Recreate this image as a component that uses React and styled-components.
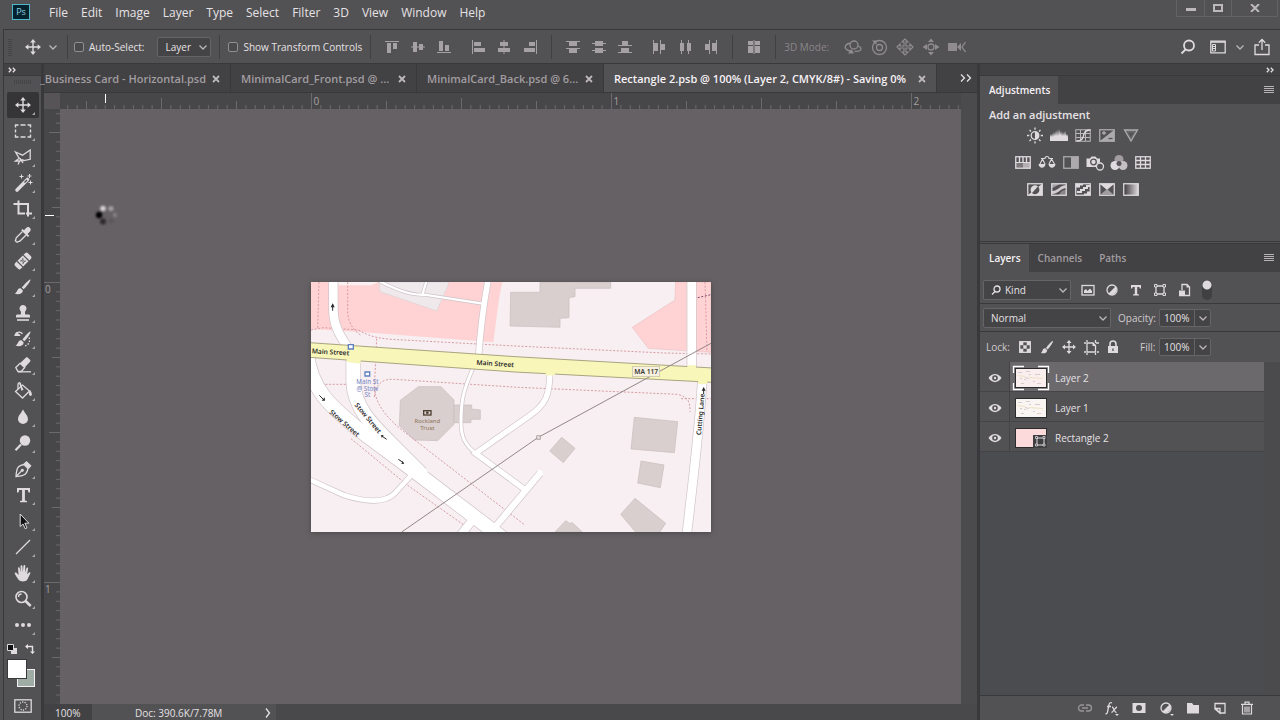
import styled, { createGlobalStyle, css } from "styled-components";

const color = {
  bar: "#525153",
  dark: "#424143",
  ruler: "#474648",
  canvas: "#656164",
  line: "#39383a",
  field: "#444345",
  fieldBorder: "#666467",
  text: "#e6e2e6",
  dim: "#a19da1",
  icon: "#dedade",
};

const GlobalStyle = createGlobalStyle`
  * {
    box-sizing: border-box;
  }
  body {
    margin: 0;
    background: ${color.bar};
    color: ${color.text};
    font-family: "Open Sans", "Noto Sans", sans-serif;
    font-size: 10px;
    line-height: 16px;
  }
  button, input, select {
    margin: 0;
    padding: 0;
    border: 0;
    background: none;
    color: inherit;
    font: inherit;
  }
  svg {
    display: block;
    flex: none;
  }
`;

/* ---------- icons ---------- */

const Icon = ({ w = 20, h = 20, children, ...rest }) => (
  <svg
    width={w}
    height={h}
    viewBox={`0 0 ${w} ${h}`}
    fill="none"
    stroke="currentColor"
    strokeWidth="1.3"
    aria-hidden="true"
    {...rest}
  >
    {children}
  </svg>
);

const Chevron = () => (
  <Icon w={10} h={10}>
    <path d="M1.5 3.5 5 7l3.5-3.5" stroke="#bab6ba" />
  </Icon>
);

const DoubleChevron = ({ big }) =>
  big ? (
    <Icon w={12} h={10}>
      <path d="M1 1.5 4.5 5 1 8.5M7 1.5 10.5 5 7 8.5" />
    </Icon>
  ) : (
    <Icon w={8} h={6}>
      <path d="M.8.8 3 3 .8 5.2M4.8.8 7 3 4.8 5.2" />
    </Icon>
  );

const MenuLines = () => (
  <Icon w={10} h={8} strokeWidth="1" stroke="#b6b2b6">
    <path d="M0 .5h10M0 2.5h10M0 4.5h10M0 6.5h10" />
  </Icon>
);

const CloseX = () => (
  <Icon w={8} h={8} strokeWidth="1.8">
    <path d="m1 1 6 6M7 1 1 7" />
  </Icon>
);

const solid = { fill: "currentColor", stroke: "none" };

const toolIcons = {
  Move: (
    <>
      <path d="M10 4v12M4 10h12" strokeWidth="1.4" />
      <path
        d="m10 2 2.8 3.4H7.2zM10 18l2.8-3.4H7.2zM2 10l3.4-2.8v5.6zM18 10l-3.4-2.8v5.6z"
        {...solid}
      />
    </>
  ),
  Marquee: (
    <path
      d="M2.5 6.5V4h3M7.5 4h5M14.5 4h3v2.5M17.5 8.5v3M17.5 13.5V16h-3M12.5 16h-5M5.5 16h-3v-2.5M2.5 11.5v-3"
      strokeWidth="1.4"
    />
  ),
  Lasso: (
    <>
      <path d="m2.5 5 7 3.2L17.2 3v9.3l-7.7 1.5L6 11z" />
      <path d="M6 11.5 2.5 14h4.3L5 17.5M6.5 11l3.5 5M7 14l3.5-1.5" />
    </>
  ),
  Wand: (
    <>
      <path d="M4 17 14.5 6.5" strokeWidth="3.6" strokeLinecap="round" />
      <path d="m11.5 9.5 2.5-2.5" stroke="#525153" strokeWidth="1.4" />
      <path d="M8.5 1.5v4M6.5 3.5h4M16.5 1v4M14.5 3h4M17.5 7.5v4M15.5 9.5h4" strokeWidth="1" />
    </>
  ),
  Crop: (
    <>
      <path d="M.5 5H15v9M5.500 1.500V14.5H12" strokeWidth="2" />
      <path d="M15 13v4.5M13 14.5h6" strokeWidth="2" />
    </>
  ),
  Eyedropper: (
    <>
      <path d="M9.5 6.5 3.5 12.5c-.8.8-.3 2-1.2 3.2.7 1 1.2 1.3 2 1.5 1.2-.9 2.2-.7 3-1.5l6-6" />
      <path
        d="M8.2 5.2 15 12l1.3-1.3-1.8-1.8L17 6.500c2.300-2.400-1.300-6.200-3.700-3.700L11 5.200 9.500 3.900z"
        {...solid}
      />
    </>
  ),
  Healing: (
    <g transform="rotate(-45 10 10)">
      <rect x="1" y="6" width="18" height="8" rx="2" {...solid} />
      <path d="M5.700 6v8M14.300 6v8" stroke="#525153" strokeWidth="1.2" />
      <path
        d="M8 8.500h1.500M10.500 8.500H12M8 11.500h1.500M10.500 11.500H12M9.200 10h1.600"
        stroke="#525153"
        strokeWidth="1.3"
      />
    </g>
  ),
  Brush: (
    <>
      <path d="M17.5 2.5c-1-.8-7 5.700-8.700 8l1.800 1.800c2.400-2 7.600-9 6.900-9.800z" {...solid} />
      <path d="M7.700 11.300c-3.500-.8-2.700 3.500-6 5.200 3 1.300 8 .8 8.200-3z" {...solid} />
    </>
  ),
  Stamp: (
    <>
      <path
        d="M10 2a3.400 3.400 0 0 0-3 5.200c1.200 1.500 1.200 2.600.7 4.300H4.500c-1 0-1.500.5-1.500 1.500v1.500h14V13c0-1-.5-1.500-1.500-1.500h-3.200c-.5-1.700-.5-2.800.7-4.300A3.400 3.400 0 0 0 10 2z"
        {...solid}
      />
      <path d="M4 17h12" strokeWidth="1.6" />
    </>
  ),
  History: (
    <>
      <path d="M17.5 2.5c-1-.8-6.500 5.700-8 8l1.800 1.800c2.400-2 6.900-9 6.200-9.800z" {...solid} />
      <path d="M8.500 11.300c-3.500-.8-2.700 3.500-6 5.200 3 1.300 8 .8 8.200-3z" {...solid} />
      <path d="M1 7h6.500c-.4-2-4-3.500-4-3.500z" {...solid} />
      <path d="M2 5.500C4 2.500 8 2.500 9.500 5" />
      <path d="M16 8.500c1.500 4-.5 7.500-4 8.500" strokeDasharray="1.5 1.5" />
    </>
  ),
  Eraser: (
    <>
      <path d="M2.8 12.500 7 8.300l4.700 4.200-3.500 4H5z" />
      <path
        d="m7 8.300 5.800-5.500c.6-.6 1.400-.6 2 0l2.200 2c.6.600.6 1.400 0 2l-5.300 5.700z"
        {...solid}
      />
      <path d="M5 16.800h13" />
    </>
  ),
  Bucket: (
    <>
      <path d="m2.5 10.500 7-6.500 7 6-7 7z" />
      <path d="M9 9.500 7.500 3c-.4-1.800-2.600-1.600-2.500.5v4.500" />
      <path d="M6.500 2.500 10 9" />
      <path d="M17 9c1.800 2.500 2.800 5 .8 6-2-.2-2.600-2.500-.8-6z" {...solid} />
    </>
  ),
  Blur: (
    <path
      d="M10 2.500c-2.500 4.300-5 6.600-5 9.500a5 5 0 0 0 10 0c0-2.900-2.500-5.200-5-9.500z"
      {...solid}
    />
  ),
  Dodge: (
    <>
      <circle cx="12" cy="7.5" r="5.2" {...solid} />
      <path d="M8 11.500 2.500 17.200" strokeWidth="2.2" />
    </>
  ),
  Pen: (
    <>
      <path d="M3 17.500c.3-4.500.7-8 2.500-9.700 1.500-1.300 3.700-2 5.500-2.300l4 4c-.4 1.900-1 4-2.300 5.300C11 16.500 7.500 17.200 3 17.500z" />
      <path d="m3.500 17 5-5" />
      <circle cx="9.300" cy="11.200" r="1.500" {...solid} />
      <path d="m10.500 4.700 3-2.700 5 4.700-2.800 3.300z" {...solid} />
    </>
  ),
  Type: (
    <path
      d="M4 3h13v4.500h-1.500L14.800 5h-2.900v10.500l2.100.5v1.300H7V16l2.100-.5V5H6.200L5.500 7.500H4z"
      {...solid}
    />
  ),
  Select: (
    <path
      d="M7.200 3v12.500l2.800-2.500 2.200 4.700 1.800-.9-2.200-4.600h4z"
      fill="#111"
      stroke="#dedade"
      strokeWidth="1"
    />
  ),
  Line: <path d="M3 17 17 3" />,
  Hand: (
    <path
      d="M5.200 16.300C4 14.500 2.200 12 1.700 10.500c-.2-1 1.200-1.500 2-.6l1.900 2L5 5.200c-.1-1.200 1.500-1.400 1.700-.2L7.700 9.500 7.500 3.200c0-1.300 1.800-1.300 1.900 0l.5 6 .5-6.200c.1-1.300 1.900-1.200 1.900.1l-.1 6.500 1.200-4.400c.4-1.200 1.900-.8 1.700.4l-1 5.600 1.600-1.500c.9-.9 2.200 0 1.500 1.100-1.200 1.900-1.600 4.200-3.400 6.500-1.500 1.600-7 1.700-8.600-1z"
      {...solid}
    />
  ),
  Zoom: (
    <>
      <circle cx="8.500" cy="8" r="5.500" strokeWidth="1.6" />
      <path d="M5.500 8a3 3 0 0 1 3-3" />
      <path d="m12.500 12 5.200 5" strokeWidth="2.6" />
    </>
  ),
  More: (
    <g {...solid}>
      <circle cx="4" cy="10" r="2" />
      <circle cx="10" cy="10" r="2" />
      <circle cx="16" cy="10" r="2" />
    </g>
  ),
};

const alignIcons = {
  "Align top": <path d="M2 3h14v1H2zM4 5h4v10H4zM10 5h4v6h-4z" />,
  "Align middle": <path d="M2 8.500h14v1H2zM4 4h4v10H4zM10 6h4v6h-4z" />,
  "Align bottom": <path d="M2 14h14v1H2zM4 3h4v10H4zM10 7h4v6h-4z" />,
  "Align left": <path d="M3 2h1v14H3zM5 4h7v4H5zM5 10h11v4H5z" />,
  "Align center": <path d="M8.500 2h1v14h-1zM5 4h8v4H5zM3 10h12v4H3z" />,
  "Align right": <path d="M15 2h1v14h-1zM8 4h6v4H8zM3 10h11v4H3z" />,
  "Distribute top": <path d="M2 3h14v1H2zM5 4h8v4H5zM2 10h14v1H2zM5 11h8v4H5z" />,
  "Distribute middle": <path d="M2 5h14v1H2zM5 3h8v5H5zM2 12h14v1H2zM5 10h8v5H5z" />,
  "Distribute bottom": <path d="M2 7h14v1H2zM6 3h6v4H6zM2 14h14v1H2zM5 10h8v4H5z" />,
  "Distribute left": <path d="M3 2h1v14H3zM4 5h4v8H4zM10 2h1v14h-1zM11 6h4v6h-4z" />,
  "Distribute center": <path d="M5 2h1v14H5zM4 5h4v8H4zM12 2h1v14h-1zM11 5h4v8h-4z" />,
  "Distribute right": <path d="M7 2h1v14H7zM3 6h4v6H3zM14 2h1v14h-1zM10 5h4v8h-4z" />,
};

const AutoAlign = (
  <path d="M8.500 2h1v14h-1zM3 3h5v4H3zM10 3h5v4h-5zM3 8h5v7H3zM10 8h5v7h-5z" />
);

const threeDIcons = {
  Orbit: (
    <>
      <circle cx="10" cy="7" r="4" />
      <path d="M6.500 5C1 6 .5 9 2 11c1.500 1.500 3 2 5 2M14 8c3 1 4 3 2 4.500-1.500 1-3.500 1-5.500.8" />
      <path d="M4 15.500h6L7.500 11z" {...solid} />
    </>
  ),
  Roll: (
    <>
      <circle cx="9.500" cy="9.500" r="7" />
      <circle cx="9.500" cy="9.500" r="3" />
      <path d="M2 2.500h4.500V7z" {...solid} />
    </>
  ),
  Pan: (
    <path
      d="M9 1 6 4h2v4H4V6L1 9l3 3v-2h4v4H6l3 3 3-3h-2v-4h4v2l3-3-3-3v2h-4V4h2z"
      strokeWidth="1.2"
    />
  ),
  Slide: (
    <>
      <circle cx="9" cy="9" r="3" />
      <path d="m6 4 3-3.500L12 4zM6 14h6l-3 3.500zM.5 9 5 6v6zM17.500 9 13 6v6z" {...solid} />
    </>
  ),
  Camera: (
    <>
      <path d="M0 5h9v8H0zM9 9l4-4v8z" {...solid} />
      <path d="M17.500 4 14 9l3.500 5" />
    </>
  ),
};

const boxed = { x: 0.75, y: 0.75, width: 14.5, height: 11.5 };

const adjustmentRows = [
  {
    Brightness: (
      <>
        <circle cx="8" cy="6.500" r="3.800" />
        <path d="M8 2.700a3.800 3.800 0 0 1 0 7.600z" {...solid} />
        <path d="M8-1.500v2.300M8 12.200v2.300M0 6.500h2.300M13.700 6.500H16M2.500 1l1.500 1.500M12 10.500l1.500 1.500M13.500 1 12 2.500M4 10.500 2.500 12" />
      </>
    ),
    Levels: (
      <path
        d="M-1 12V8l1-3 1 3V4l1 4 1-5 1 4V2l1 5L6 1l1 6 1-7 1 6 1-4 1 5 1-4 1 4 1-5 1 5 1-2 1 3v4z"
        {...solid}
      />
    ),
    Curves: (
      <>
        <g strokeWidth="1" opacity=".75">
          <rect {...boxed} />
          <path d="M5.500 1v11M10.500 1v11M1 4.500h14M1 8.500h14" />
        </g>
        <path d="M1.500 12C8 12 8 8 9 5s2.500-4 6.500-4" />
      </>
    ),
    Exposure: (
      <g opacity=".65">
        <rect {...boxed} />
        <path d="M1 12 15 1v11z" {...solid} />
        <path d="M3 4h4M5 2v4" />
        <path d="M9.500 9.500h4" stroke="#525153" />
      </g>
    ),
    Vibrance: (
      <g opacity=".65">
        <path d="M1.500 1h13L8 12z" fill="#777" />
        <path d="M5 3.500h6L8 8.500z" fill="#555" stroke="none" />
      </g>
    ),
  },
  {
    "Hue/Saturation": (
      <>
        <path d="M1 7h14v5H1z" fill="#7c787c" stroke="none" />
        <path d="M8 7h7v5H8z" fill="#b3afb3" stroke="none" />
        <rect {...boxed} />
        <path d="M1 6.500h14" strokeWidth="1" />
        <path d="M4.500 1v5M8 1v5M11.500 1v5" strokeWidth="1.4" />
      </>
    ),
    "Color Balance": (
      <>
        <path
          d="M2 2.500h4a2 2 0 0 1 4 0h4M3.500 3 1 8M3.500 3 6 8M12.500 3 10 8M12.500 3l3 5"
          strokeWidth="1.1"
        />
        <path d="M-.5 8h7c-.5 5-6.500 5-7 0zM9.500 8h7c-.5 5-6.500 5-7 0z" {...solid} />
      </>
    ),
    "Black & White": (
      <g opacity=".65">
        <rect {...boxed} />
        <path d="M8 1h7v11H8z" {...solid} />
      </g>
    ),
    "Photo Filter": (
      <>
        <path d="M-.5 2.500H3l1.500-2h4l1.500 2h3v4A4.500 4.500 0 0 0 9 11H-.5z" {...solid} />
        <circle cx="6.500" cy="6" r="2.800" stroke="#525153" />
        <circle cx="13" cy="10.500" r="3.500" fill="#525153" />
      </>
    ),
    "Channel Mixer": (
      <g stroke="none">
        <circle cx="8" cy="3.500" r="4.500" fill="#a19da1" />
        <circle cx="4" cy="9.500" r="4.500" fill="#dedade" />
        <circle cx="12" cy="9.500" r="4.500" fill="#c4c0c4" />
        <circle cx="8" cy="7.500" r="2.500" fill="#58565a" />
      </g>
    ),
    "Color Lookup": (
      <>
        <rect {...boxed} />
        <path d="M5.500 1v11M10.500 1v11M1 4.500h14M1 8.500h14" />
      </>
    ),
  },
  {
    Invert: (
      <>
        <rect {...boxed} />
        <path d="M1 12 15 1v11z" {...solid} />
        <path d="M5 10a4 4 0 0 1 6-6.500z" {...solid} />
        <path d="M5 10a4.200 4.200 0 0 0 6-6.500z" fill="#525153" stroke="none" />
      </>
    ),
    Posterize: (
      <>
        <path d="M1 5C5 4 6 2 9 1H1z" fill="#a19da1" stroke="none" />
        <path d="M1 8C7 8 8 3 15 2v3C9 6 7 11 1 11z" fill="#d0ccd0" stroke="none" />
        <path d="M8 12c2-4 4-5 7-5v5z" fill="#8a868a" stroke="none" />
        <rect {...boxed} />
      </>
    ),
    Threshold: (
      <>
        <rect {...boxed} />
        <path d="M2 10V8h3V6h3V4h3V2h4v2h-2v2h-3v2H7v2z" {...solid} />
        <path d="M1 1h7v1.500H5v2H1zM15 12H9v-1.500h3v-2h3z" {...solid} />
      </>
    ),
    "Selective Color": (
      <>
        <rect {...boxed} />
        <path d="M1 1h14L8 7z" {...solid} />
        <path d="M1 12h14L8 6z" fill="#a19da1" stroke="none" />
      </>
    ),
    "Gradient Map": (
      <>
        <defs>
          <linearGradient id="gradientMap">
            <stop offset="0" stopColor="#3a383a" />
            <stop offset="1" stopColor="#dedade" />
          </linearGradient>
        </defs>
        <rect {...boxed} fill="url(#gradientMap)" />
      </>
    ),
  },
];

const filterIcons = {
  "Pixel layers": (
    <>
      <rect x="2" y="3.500" width="12" height="9.500" />
      <path d="M4 11V8.500L6 7l1.500 2L10 6.500 12 9v2z" {...solid} />
    </>
  ),
  "Adjustment layers": (
    <>
      <circle cx="8" cy="8" r="5" />
      <path d="M11.500 4.500a5 5 0 0 1-7 7z" {...solid} />
    </>
  ),
  "Type layers": (
    <path
      d="M3 3h10v3.500h-1.200L11.300 5H9.200v7l1.800.4v1.100H5v-1.100l1.800-.4V5H4.700l-.5 1.500H3z"
      {...solid}
    />
  ),
  "Shape layers": (
    <>
      <path d="M4 4h8v8H4z" />
      <path
        d="M2.500 2.500H5V5H2.500zM11 2.500h2.500V5H11zM2.500 11H5v2.500H2.500zM11 11h2.500v2.500H11z"
        fill="#525153"
        strokeWidth="1"
      />
    </>
  ),
  "Smart objects": (
    <>
      <path d="M6 8V2.500h5L13.500 5v8.500H9" />
      <path d="M3 8.500h6v5.800H3zM10.500 2v3.500H14z" {...solid} />
    </>
  ),
};

const lockIcons = {
  "Lock transparent pixels": (
    <>
      <rect x="2.700" y="2.700" width="10.600" height="10.600" />
      <path
        d="M3 3h3.300v3.300H3zM9.700 3H13v3.300H9.700zM6.300 6.300h3.400v3.400H6.300zM3 9.700h3.300V13H3zM9.700 9.700H13V13H9.700z"
        {...solid}
      />
    </>
  ),
  "Lock image pixels": (
    <path
      d="M14 2c-1-.7-5.500 4.700-7 7l1.500 1.500C10.500 9 14.500 2.700 14 2zM6.300 9.300c-2.800-.5-2.300 3-4.300 4.700 2.500.8 6 .3 6.200-2.800z"
      {...solid}
    />
  ),
  "Lock position": (
    <>
      <path d="M8 2v12M2 8h12" />
      <path d="m8 1 2.500 3h-5zM8 15l2.500-3h-5zM1 8l3-2.500v5zM15 8l-3-2.500v5z" {...solid} />
    </>
  ),
  "Lock artboard": (
    <>
      <path d="M4 4h6l2.500 2.500V13H4z" />
      <path d="M1 4h2M1 13h2M14 13h2M4 1v2M4 14v2M12.500 1v3M12.500 14v2M13 4h3" />
      <path d="M9.500 3.500V7H13z" {...solid} />
    </>
  ),
  "Lock all": (
    <>
      <path d="M5 8V5a3 3 0 0 1 6 0v3" strokeWidth="1.6" />
      <path d="M3 7h10v7H3z" {...solid} />
      <path d="M8 9.500V12" stroke="#525153" />
    </>
  ),
};

const footerIcons = {
  "Link layers": (
    <g opacity=".5">
      <path d="M7 5H4.500a3 3 0 0 0 0 6H7M9 5h2.500a3 3 0 0 1 0 6H9M5 8h6" />
    </g>
  ),
  "Layer style": (
    <>
      <path d="M8 3c-2-1-2.800.5-3.200 2.500L3.500 12c-.3 1.700-1 2-2 1.600M3 6.500h4M8 7c2 0 2 6 4.500 5.500M13 7c-2 .5-3.500 5-5.500 5.500" />
      <path d="M11 14h4l-2 2z" {...solid} />
    </>
  ),
  "Add mask": (
    <>
      <path d="M1.500 3h13v10h-13z" {...solid} />
      <circle cx="8" cy="8" r="3" fill="#525153" stroke="none" />
    </>
  ),
  "New adjustment": (
    <>
      <circle cx="8" cy="8" r="5" />
      <path d="M11.500 4.500a5 5 0 0 1-7 7z" {...solid} />
      <path d="M12 14h4l-2 2z" {...solid} />
    </>
  ),
  "New group": <path d="M2 3h5l1.500 2H14v8.500H2z" {...solid} />,
  "New layer": (
    <>
      <path d="M3 3.500h10V13H8L3 9z" />
      <path d="M3.500 8.500H8V13z" />
    </>
  ),
  Delete: (
    <path
      d="M3.500 5v9h9V5M2 4.300h12M6 4V2.200h4V4M6 6.500v6M8 6.500v6M10 6.500v6"
      strokeWidth="1.2"
    />
  ),
};

/* ---------- menu bar ---------- */

const Page = styled.div`
  display: flex;
  flex-direction: column;
  height: 100vh;
  min-height: 720px;
  overflow: hidden;
  background: ${color.bar};
`;

const MenuBar = styled.header`
  display: flex;
  height: 29px;
  padding-left: 12px;
`;

const PsLogo = styled.div`
  width: 18px;
  height: 16px;
  margin: 4px 12px 0 0;
  border: 1px solid #4fb8c9;
  background: #06222f;
  color: #8fd4e4;
  font-size: 9px;
  line-height: 14px;
  text-align: center;
`;

const Menus = styled.nav`
  display: flex;
  flex: 1;
`;

const MenuItem = styled.button`
  height: 26px;
  padding: 0 6px 0 7px;
  font-size: 12px;
  line-height: 26px;
`;

const WindowControls = styled.div`
  display: flex;
  align-self: flex-start;
  margin-right: 2px;
  border: 1px solid #646265;
  border-top: 0;
`;

const WindowButton = styled.button`
  display: grid;
  place-items: center;
  width: ${({ $wide }) => ($wide ? 46 : 27)}px;
  height: 16px;
  color: #bcb8bc;

  & + & {
    border-left: 1px solid #646265;
  }
`;

/* ---------- options bar ---------- */

const OptionsBar = styled.div`
  display: flex;
  align-items: center;
  height: 35px;
  margin-left: 3px;
  padding: 0 3px 0 4px;
  border: solid ${color.line};
  border-width: 1px 0 1px 1px;
`;

const Grip = styled.span`
  width: ${({ $flat }) => ($flat ? 18 : 4)}px;
  height: ${({ $flat }) => ($flat ? 4 : 18)}px;
  background: repeating-linear-gradient(
    ${({ $flat }) => ($flat ? "90deg" : "0deg")},
    #454446 0 1px,
    transparent 1px 2px
  );
`;

const ToolPreset = styled.button`
  display: flex;
  align-items: center;
  gap: 5px;
  margin: 0 3px 0 11px;
  color: ${color.icon};
`;

const Separator = styled.span`
  width: 1px;
  height: 24px;
  margin: 0 ${({ $gap = 8 }) => $gap}px;
  background: #403f41;
`;

const Check = styled.label`
  display: flex;
  align-items: center;
  gap: 5px;

  > input {
    width: 10px;
    height: 10px;
    border: 1px solid #918d91;
    border-radius: 2px;
    background: #4a494b;
    appearance: none;
  }
`;

const SelectBox = styled.div`
  display: grid;
  align-items: center;
  width: ${({ $width }) => $width}px;
  margin-left: ${({ $gap = 0 }) => $gap}px;

  > select {
    grid-area: 1 / 1;
    width: 100%;
    height: 20px;
    padding-left: ${({ $indent = 7 }) => $indent}px;
    border: 1px solid ${color.fieldBorder};
    border-radius: 2px;
    background: ${color.field};
    appearance: none;
  }

  > svg {
    grid-area: 1 / 1;
    justify-self: end;
    margin-right: 3px;
    pointer-events: none;
  }

  > svg.lead {
    justify-self: start;
    margin-left: 8px;
  }
`;

const IconButton = styled.button`
  display: grid;
  place-items: center;
  width: ${({ $width = 26 }) => $width}px;
  height: 22px;
  color: ${({ $color = color.icon }) => $color};
`;

const IconGroup = styled.div`
  display: flex;
  align-items: center;
  margin-left: ${({ $gap = 0 }) => $gap}px;
`;

const ModeLabel = styled.span`
  width: 56px;
  color: #8a868a;
`;

const Spacer = styled.span`
  flex: 1;
`;

/* ---------- toolbox ---------- */

const Workspace = styled.div`
  display: flex;
  flex: 1;
  min-height: 0;
`;

const Toolbox = styled.aside`
  display: flex;
  flex-direction: column;
  align-items: center;
  width: 41px;
  margin-left: 3px;
  border: solid ${color.line};
  border-width: 0 3px 0 1px;
`;

const CollapseBar = styled.button`
  display: flex;
  align-items: center;
  justify-content: ${({ $end }) => ($end ? "flex-end" : "flex-start")};
  width: 100%;
  height: 12px;
  padding: 0 6px 0 4px;
  border-bottom: 1px solid ${color.line};
  background: ${color.dark};
`;

const GripArea = styled.div`
  padding: 4px 0 8px;
`;

const ToolButton = styled.button`
  position: relative;
  display: grid;
  place-items: center;
  width: 32px;
  height: 26px;
  border-radius: 2px;
  background: ${({ $active }) => ($active ? "#353436" : "none")};
  color: ${color.icon};

  &::after {
    content: "";
    position: absolute;
    right: 4px;
    bottom: 3px;
    border-top: 3px solid transparent;
    border-right: 3px solid #aaa6aa;
  }
`;

const SwatchTools = styled.div`
  display: flex;
  align-items: center;
  gap: 8px;
  height: 21px;
  padding-right: 3px;
`;

const Swatches = styled.div`
  display: grid;
  grid-template-columns: 10px 10px 8px;
  grid-template-rows: 10px 10px 8px;
  margin-right: 3px;
`;

const Swatch = styled.button`
  border: 1px solid #39383a;
  background: ${({ $fill }) => $fill};
  ${({ $front }) =>
    $front
      ? css`
          z-index: 1;
          grid-area: 1 / 1 / 3 / 3;
        `
      : css`
          grid-area: 2 / 2 / 4 / 4;
          border-color: #f3eff3;
        `}
`;

const QuickMask = styled.button`
  margin-top: 12px;
  color: ${color.icon};
`;

/* ---------- document ---------- */

const DocumentArea = styled.main`
  display: flex;
  flex: 1;
  flex-direction: column;
  min-width: 0;
`;

const TabBar = styled.div`
  display: flex;
  align-items: center;
  height: 29px;
  border-bottom: 1px solid ${color.line};
  background: ${color.dark};
`;

const Tab = styled.div`
  display: flex;
  flex: 0 1 ${({ $width }) => $width}px;
  align-items: center;
  height: 28px;
  padding: 2px 10px 0 ${({ $cut }) => ($cut ? 0 : 10)}px;
  border-right: 1px solid ${color.line};
  background: ${({ $active }) => ($active ? color.bar : "none")};
  color: ${({ $active }) => ($active ? "#f6f2f6" : color.dim)};
  font-size: 11px;
  font-weight: 600;
  white-space: nowrap;

  > button:first-child {
    flex: 1;
    margin-left: ${({ $cut }) => ($cut ? -4 : 0)}px;
    text-align: left;
  }

  > button:last-child {
    color: #bcb8bc;
  }
`;

const OverflowButton = styled.button`
  margin: 0 5px 0 auto;
`;

const ViewGrid = styled.div`
  display: grid;
  flex: 1;
  grid-template-columns: 16px 1fr 16px;
  grid-template-rows: 16px 1fr;
  min-height: 0;
  background: ${color.ruler};
`;

const RulerCorner = styled.span`
  background: #565457;
`;

const RulerSvg = styled.svg`
  width: 100%;
  height: 100%;
  overflow: hidden;

  text {
    fill: #a5a1a5;
    font-size: 10px;
  }
`;

const ScrollTrack = styled.span`
  width: 16px;
  background: #4b4a4c;
`;

const Canvas = styled.div`
  position: relative;
  display: grid;
  place-items: center;
  min-width: 0;
  overflow: hidden;
  background: ${color.canvas};

  > svg {
    box-shadow: 0 1px 5px #4a474a;
  }
`;

const BusyCursor = styled.div`
  position: absolute;
  top: 95px;
  left: 36px;
  filter: blur(1px);
`;

const StatusBar = styled.footer`
  display: flex;
  height: 16px;
  background: #49484a;

  > input {
    width: 48px;
    padding: 1px 0 0 11px;
    background: ${color.dark};
  }
`;

const DocInfo = styled.button`
  display: flex;
  align-items: center;
  justify-content: space-between;
  width: 184px;
  padding: 1px 4px 0 43px;
  background: ${color.bar};
`;

/* ---------- panels ---------- */

const Panels = styled.aside`
  display: flex;
  flex: 0 0 303px;
  flex-direction: column;
  border-left: 3px solid ${color.line};
`;

const PanelTabs = styled.div`
  display: flex;
  align-items: center;
  height: 28px;
  padding-right: 6px;
  background: ${color.dark};
`;

const PanelTab = styled.button`
  height: 28px;
  padding: 0 8px 0 9px;
  background: ${({ $active }) => ($active ? color.bar : "none")};
  color: ${({ $active }) => ($active ? "#f6f2f6" : color.dim)};
  font-weight: 600;
`;

const PanelMenu = styled.button`
  margin-left: auto;
`;

const Adjustments = styled.section`
  height: 137px;
  padding: 3px 9px;
`;

const AdjustmentTitle = styled.h2`
  margin: 0 0 1px;
  font-size: 11px;
  font-weight: 600;
  line-height: 16px;
`;

const AdjustmentRow = styled.div`
  display: flex;
  justify-content: center;
  width: 188px;
  margin-bottom: 5px;

  svg {
    overflow: visible;
  }
`;

const PanelGap = styled.div`
  height: 3px;
  border-top: 1px solid ${color.line};
  border-bottom: 1px solid ${color.line};
`;

const PanelRow = styled.div`
  display: flex;
  align-items: center;
  height: ${({ $height }) => $height}px;
  padding: ${({ $top = 0 }) => $top}px 0 0 3px;
  border-bottom: ${({ $line }) => ($line ? `1px solid ${color.line}` : "0")};
`;

const FilterToggle = styled.input`
  width: 10px;
  height: 20px;
  margin: 0 0 0 6px;
  border-radius: 5px;
  appearance: none;
  background: radial-gradient(circle at 5px 5px, #dedade 4px, transparent 5px), #403f41;
`;

const RowLabel = styled.label`
  width: ${({ $width }) => $width}px;
  padding-left: ${({ $indent = 0 }) => $indent}px;
  color: #cfcbcf;
`;

const PercentField = styled.div`
  display: flex;
  width: 52px;
  height: 18px;
  border: 1px solid ${color.fieldBorder};
  border-radius: 2px;
  background: ${color.field};

  > input {
    width: 34px;
    padding-left: 4px;
  }

  > button {
    flex: 1;
    display: grid;
    place-items: center;
    border-left: 1px solid ${color.fieldBorder};
  }
`;

const LayerArea = styled.div`
  display: flex;
  flex: 1;
  min-height: 0;
  background: #4b4c50;
`;

const LayerList = styled.ul`
  flex: 1;
  margin: 0;
  padding: 0;
  list-style: none;
`;

const LayerRow = styled.li`
  display: flex;
  height: 30px;
  border-bottom: 1px solid #444345;
  background: ${color.bar};
`;

const EyeButton = styled.button`
  display: grid;
  place-items: center;
  width: 30px;
  padding-top: 2px;
  border-right: 1px solid #444345;
  color: ${color.icon};
`;

const LayerButton = styled.button`
  display: flex;
  flex: 1;
  align-items: center;
  gap: 5px;
  padding: 2px 0 0 2px;
  background: ${({ $active }) => ($active ? "#6b696c" : "none")};
  text-align: left;
`;

const Footer = styled.footer`
  display: flex;
  align-items: center;
  justify-content: flex-end;
  height: 25px;
  padding-right: 20px;
  border-top: 1px solid ${color.line};
`;

/* ---------- data ---------- */

const menus = ["File", "Edit", "Image", "Layer", "Type", "Select", "Filter", "3D", "View", "Window", "Help"];

const tabs = [
  { title: "_Business Card - Horizontal.psd", width: 187, cut: true },
  { title: "MinimalCard_Front.psd @ ...", width: 186 },
  { title: "MinimalCard_Back.psd @ 6...", width: 187 },
  { title: "Rectangle 2.psb @ 100% (Layer 2, CMYK/8#) - Saving 0%", width: 333, active: true },
];

const layers = [
  { name: "Layer 2", kind: "pixel", active: true },
  { name: "Layer 1", kind: "pixel" },
  { name: "Rectangle 2", kind: "shape" },
];

const alignNames = Object.keys(alignIcons);

/* ---------- pieces ---------- */

const TICK = 9.375;

// The origin sits on the artwork's edge, so ticks count outward from the middle of the view.
const Ruler = ({ vertical }) => {
  const origin = vertical ? -124 : -199;
  const labels = vertical ? [0, 1] : [0, 1, 2];
  const ticks = [];
  for (let i = -60; i <= 100; i++) {
    const at = origin + i * TICK;
    const long = i % 32 === 0 ? 16 : i % 16 === 0 ? 11 : i % 8 === 0 ? 8 : 4;
    ticks.push(vertical ? `M${16 - long} ${at}h${long}` : `M${at} ${16 - long}v${long}`);
  }
  return (
    <RulerSvg aria-hidden="true">
      <svg x={vertical ? 0 : "50%"} y={vertical ? "50%" : 0} overflow="visible">
        <path d={ticks.join("")} stroke="#6c696c" strokeWidth="1" />
        {labels.map((n) =>
          vertical ? (
            <text key={n} x="1" y={origin + n * 300 + 10}>
              {n}
            </text>
          ) : (
            <text key={n} x={origin + n * 300 + 2} y="12">
              {n}
            </text>
          )
        )}
        <path d={vertical ? "M1-191h9" : "M-405 1v9"} stroke="#fff" />
      </svg>
    </RulerSvg>
  );
};

const roads = [
  { d: "M67-10V80C67 150 105 180 124 220", w: 26 },
  { d: "M127 210V300C130 380 185 430 245 490L330 575", w: 42 },
  { d: "M-12 215C0 330 70 380 140 440L310 567 590 780", w: 42 },
  { d: "M532-10C515 80 508 150 502 230", w: 17 },
  { d: "M486 258C455 330 450 360 450 420 450 470 465 490 494 514", w: 9 },
  { d: "M717 262C717 340 705 368 650 405L494 514 637 619", w: 16 },
  { d: "M687 574 540 750", w: 19 },
  { d: "M480 720 440 770", w: 24 },
  { d: "M-10 590 100 640C180 665 230 660 255 630L305 575", w: 14 },
  { d: "M200-5C260 25 300 40 340 38L510 64M347-5 335 35", w: 7 },
  { d: "M1142-10V270", w: 26 },
  { d: "M1174 290C1165 450 1145 600 1126 770", w: 26 },
];

const buildings = [
  "M322 314h68l39 40v73l-49 49-70-2-45-43 3-76z",
  "M429 369h53v12l26 3v28h-28v10h-51z",
  "M599 31h88V0h212v19H792v25l-18 3v60l-27 2v27l-150-4z",
  "M970 406l130 13-10 93-130-11z",
  "M990 537l69 12-11 68-68-14z",
  "M972 649l92 75-20 30h-67l-48-57z",
  "M752 466l40 33-35 43-41-35z",
  "M732 750l32-34 12 8 8-2 30 28z",
];

const footpaths = [
  "M0 144 37 137 142 144C180 165 200 168 240 172L612 192 1060 213 1200 216",
  "M24 0 20 140M110 0V90C112 130 135 150 150 160M197 170 190 320C195 370 230 410 280 450L640 728",
  "M190 345C195 300 220 290 250 292L620 316 1100 337C1130 345 1137 355 1137 390",
  "M0 300 30 307H105M120 470 290 610 460 730M1182 0 1188 210M1110 350H1200",
];

const MapArtwork = () => (
  <svg
    width="400"
    height="250"
    viewBox="0 0 1200 750"
    role="img"
    aria-label="Street map"
    fontFamily="Noto Sans, sans-serif"
  >
    <rect width="1200" height="750" fill="#f7eff1" />
    <path d="M0 0h574c-12 50-17 110-27 181L150 150 0 141z" fill="#ffd3d4" />
    <path d="M964 136l128-82 2-54h106v211l-188-12z" fill="#ffd3d4" stroke="#ecc0c2" strokeWidth="2" />
    <path d="M204 0l3 29 170 58L412 9V0z" fill="#efe9ec" stroke="#ddd0d4" strokeWidth="2" />
    <path d="M80 0h124l-24 10H80z" fill="#fbf0f1" />
    {buildings.map((d) => (
      <path key={d} d={d} fill="#d9cfcf" stroke="#c8bcbd" strokeWidth="2" />
    ))}
    {footpaths.map((d) => (
      <path key={d} d={d} fill="none" stroke="#d79ca5" strokeWidth="3" strokeDasharray="6 5" />
    ))}
    <path d="M1160 47 1200 38" stroke="#7a4a72" strokeWidth="3" strokeDasharray="6 5" />
    {roads.map(({ d, w }) => (
      <path key={d} d={d} fill="none" stroke="#cfc3ca" strokeWidth={w + 4} />
    ))}
    {roads.map(({ d, w }) => (
      <path key={d} d={d} fill="none" stroke="#fff" strokeWidth={w} strokeLinecap="round" />
    ))}
    <path
      d="M-5 182 612 224 1205 258V301L612 270-5 226z"
      fill="#f8f6b9"
      stroke="#a9a480"
      strokeWidth="3"
    />
    <path
      d="M107 240V222l42 3v20zM492 230l24 2-4 28-22-2zM1129 250h26v14h-26zM704 264h28v16h-28zM1161 288h28v18h-28z"
      fill="#f8f6b9"
    />
    <path d="M272 750 682 466 1200 184" fill="none" stroke="#958789" strokeWidth="3" />
    <path d="M677 461h11v11h-11z" fill="#e8e0e2" stroke="#958789" strokeWidth="2" />

    <g fill="#2c2a2c" fontSize="20" fontWeight="600">
      <text x="2" y="214" transform="rotate(3 2 214)">Main Street</text>
      <text x="496" y="248" transform="rotate(4 496 248)">Main Street</text>
      <text x="54" y="392" transform="rotate(41 54 392)">Stow Street</text>
      <text x="130" y="370" transform="rotate(50 130 370)">Stow Street</text>
      <text x="1170" y="460" transform="rotate(-85 1170 460)">Cutting Lane</text>
    </g>
    <g fill="#2c2a2c" stroke="#2c2a2c" strokeWidth="3">
      <path d="M65 86V68M25 340l13 13M227 472l-13-9M262 532l14 9M1178 336V320" fill="none" />
      <path
        d="M59 76h12l-6-12zM32 356h10l-1-10zM218 459l-9 1 4 8zM271 546l9-1-5-8zM1172 326h12l-6-11z"
        stroke="none"
      />
    </g>
    <rect x="964" y="254" width="82" height="30" fill="#f6f1de" stroke="#c2bba5" strokeWidth="2" />
    <text x="970" y="276" fontSize="20" fontWeight="600" fill="#3a3836">
      MA 117
    </text>
    <g fill="#7484c4" fontSize="19" textAnchor="middle">
      <path d="M112 188h15v13h-15zM162 270h14v12h-14z" fill="#fff" stroke="#5f7fc0" strokeWidth="4" />
      <text x="169" y="306">Main St</text>
      <text x="169" y="327">@ Stow</text>
      <text x="169" y="346">St</text>
    </g>
    <g fill="#8d7156" fontSize="18" textAnchor="middle">
      <path d="M336 384h26v17h-26z" fill="#4f4030" />
      <path d="M340 388h18v9h-18z" fill="#d9cfcf" />
      <circle cx="349" cy="392" r="4" fill="#4f4030" />
      <text x="349" y="424">Rockland</text>
      <text x="349" y="444">Trust</text>
    </g>
  </svg>
);

const Thumbnail = ({ kind, active }) => (
  <svg width="38" height="26" viewBox="0 0 38 26" aria-hidden="true">
    <rect
      x="3.5"
      y="3.5"
      width="31"
      height="19"
      fill={kind === "shape" ? "#fcd9da" : active ? "#fbeeee" : "#f8f5f2"}
      stroke="#2b2a2c"
    />
    {kind === "pixel" && (
      <>
        <path
          d="M6 7.500h4M14 6.500h4M23 9.500h5M8 13.500h2M13 12.500l4 1M21 16.500h2M29 13.500h2M9 18.500h3M17 9.500h2"
          stroke="#d5cbcb"
        />
        <path d="M5 10.500l8 1M17 12.500l14 1" stroke="#efe2c4" />
        <path d="M25 18.500h4M12 14.500h2" stroke="#decccc" />
      </>
    )}
    {kind === "shape" && (
      <>
        <path d="M21 10h14v13H21z" fill="#3f3e40" />
        <path d="M25 13h7v7h-7z" fill="none" stroke="#dedade" />
        <path
          d="M23.500 11.500h2v2h-2zM31 11.500h2v2h-2zM23.500 19h2v2h-2zM31 19h2v2h-2z"
          fill="#3f3e40"
          stroke="#dedade"
          strokeWidth=".8"
        />
      </>
    )}
    {active && (
      <path
        d="M1.500 8V1.500H12M26 1.500h10.500V8M36.500 18v6.500H26M12 24.500H1.500V18"
        fill="none"
        stroke="#fff"
        strokeWidth="1.3"
      />
    )}
  </svg>
);

const IconSet = ({ icons, size = 16, width = 24, height = size, tint, gap }) => (
  <IconGroup $gap={gap}>
    {Object.entries(icons).map(([name, art]) => (
      <IconButton key={name} $width={width} $color={tint} aria-label={name}>
        <Icon w={size} h={height}>
          {art}
        </Icon>
      </IconButton>
    ))}
  </IconGroup>
);

const AlignSet = ({ names, gap }) => (
  <IconGroup $gap={gap}>
    {names.map((name) => (
      <IconButton key={name} $color="#a5a1a5" aria-label={name}>
        <Icon w={18} h={18} fill="currentColor" stroke="none">
          {alignIcons[name]}
        </Icon>
      </IconButton>
    ))}
  </IconGroup>
);

const Percent = ({ id }) => (
  <PercentField>
    <input id={id} defaultValue="100%" />
    <button aria-label="Show slider">
      <Chevron />
    </button>
  </PercentField>
);

const Options = () => (
  <OptionsBar>
    <Grip />
    <ToolPreset aria-label="Tool presets">
      <Icon>{toolIcons.Move}</Icon>
      <Chevron />
    </ToolPreset>
    <Separator $gap={6} />
    <Check>
      <input type="checkbox" />
      Auto-Select:
    </Check>
    <SelectBox $width={54} $gap={13}>
      <select aria-label="Auto-select target">
        <option>Layer</option>
      </select>
      <Chevron />
    </SelectBox>
    <Separator />
    <Check>
      <input type="checkbox" />
      Show Transform Controls
    </Check>
    <Separator />
    <AlignSet names={alignNames.slice(0, 3)} />
    <AlignSet names={alignNames.slice(3, 6)} gap={8} />
    <Separator />
    <AlignSet names={alignNames.slice(6, 9)} />
    <AlignSet names={alignNames.slice(9)} gap={8} />
    <Separator />
    <IconButton $color="#a5a1a5" aria-label="Auto-align layers">
      <Icon w={18} h={18} fill="currentColor" stroke="none">
        {AutoAlign}
      </Icon>
    </IconButton>
    <Separator />
    <ModeLabel>3D Mode:</ModeLabel>
    <IconSet icons={threeDIcons} size={18} width={26} tint="#8f8b8f" />
    <Spacer />
    <IconButton $width={30} aria-label="Search">
      <Icon w={16} h={16} strokeWidth="1.8">
        <circle cx="9" cy="6.500" r="5" />
        <path d="M5.500 10.500 1.500 14.500" />
      </Icon>
    </IconButton>
    <IconButton $width={30} aria-label="Workspace">
      <Icon w={16} h={14}>
        <path d="M.8 1.200h14.400v11.600H.8z" />
        <path d="M1 2h14" strokeWidth="1.6" />
        <path d="M2.500 4.500h3V11h-3zM2.500 6.500h3M2.500 8.500h3" strokeWidth="1" />
      </Icon>
    </IconButton>
    <IconButton $width={14} aria-label="Workspace list">
      <Chevron />
    </IconButton>
    <IconButton $width={30} aria-label="Share">
      <Icon w={16} h={18}>
        <path d="M5 7H1v9.500h14V7h-4M8 12V2M4.800 4.700 8 1.500l3.200 3.200" />
      </Icon>
    </IconButton>
  </OptionsBar>
);

const Tools = () => (
  <Toolbox>
    <CollapseBar aria-label="Expand tools">
      <DoubleChevron />
    </CollapseBar>
    <GripArea>
      <Grip $flat as="div" />
    </GripArea>
    {Object.entries(toolIcons).map(([name, art], idx) => (
      <ToolButton key={name} $active={idx === 0} aria-label={name}>
        <Icon>{art}</Icon>
      </ToolButton>
    ))}
    <SwatchTools>
      <Icon w={10} h={10} stroke="none">
        <path d="M4 4h6v6H4z" fill="#dedade" />
        <path d="M.5.5h6v6h-6z" fill="#111" stroke="#dedade" strokeWidth="1" />
      </Icon>
      <Icon w={10} h={10} strokeWidth="1.4">
        <path d="M2 2.500h5.500V8" />
        <path d="M0 2.500 3 0v5zM5 7.500h5L7.500 10z" {...solid} />
      </Icon>
    </SwatchTools>
    <Swatches>
      <Swatch $front $fill="#fff" aria-label="Foreground color" />
      <Swatch $fill="#9eaca5" aria-label="Background color" />
    </Swatches>
    <QuickMask aria-label="Quick mask">
      <Icon w={18} h={14}>
        <rect x=".8" y=".8" width="16.400" height="12.400" />
        <circle cx="9" cy="7" r="4" strokeDasharray="1.2 1.3" />
      </Icon>
    </QuickMask>
  </Toolbox>
);

const DocumentView = () => (
  <DocumentArea>
    <TabBar>
      {tabs.map(({ title, width, cut, active }) => (
        <Tab key={title} $width={width} $cut={cut} $active={active}>
          <button>{title}</button>
          <button aria-label="Close document">
            <CloseX />
          </button>
        </Tab>
      ))}
      <OverflowButton aria-label="More documents">
        <DoubleChevron big />
      </OverflowButton>
    </TabBar>
    <ViewGrid>
      <RulerCorner />
      <Ruler />
      <ScrollTrack />
      <Ruler vertical />
      <Canvas>
        <MapArtwork />
        <BusyCursor>
          <svg width="22" height="22" viewBox="0 0 22 22" aria-hidden="true">
            <circle cx="7" cy="4.500" r="2.800" fill="#d6d2d6" />
            <circle cx="15" cy="4.500" r="2.600" fill="#a4a0a4" />
            <circle cx="19" cy="11" r="2.200" fill="#858185" />
            <circle cx="15" cy="17" r="2.400" fill="#5a575a" />
            <circle cx="7" cy="17.500" r="3" fill="#2d2b2d" />
            <circle cx="3" cy="11" r="3.200" fill="#000" />
          </svg>
        </BusyCursor>
      </Canvas>
      <ScrollTrack />
    </ViewGrid>
    <StatusBar>
      <input aria-label="Zoom level" defaultValue="100%" />
      <DocInfo>
        Doc: 390.6K/7.78M
        <Icon w={8} h={10}>
          <path d="M2 .5 5.500 5 2 9.500" />
        </Icon>
      </DocInfo>
    </StatusBar>
  </DocumentArea>
);

const AdjustmentsPanel = () => (
  <>
    <PanelTabs>
      <PanelTab $active>Adjustments</PanelTab>
      <PanelMenu aria-label="Adjustments menu">
        <MenuLines />
      </PanelMenu>
    </PanelTabs>
    <Adjustments>
      <AdjustmentTitle>Add an adjustment</AdjustmentTitle>
      {adjustmentRows.map((icons, idx) => (
        <AdjustmentRow key={idx}>
          <IconSet icons={icons} height={13} />
        </AdjustmentRow>
      ))}
    </Adjustments>
  </>
);

const LayersPanel = () => (
  <>
    <PanelTabs>
      <PanelTab $active>Layers</PanelTab>
      <PanelTab>Channels</PanelTab>
      <PanelTab>Paths</PanelTab>
      <PanelMenu aria-label="Layers menu">
        <MenuLines />
      </PanelMenu>
    </PanelTabs>
    <PanelRow $height={32} $top={4} $line>
      <SelectBox $width={88} $indent={21}>
        <select aria-label="Filter type">
          <option>Kind</option>
        </select>
        <svg
          className="lead"
          width="10"
          height="10"
          viewBox="0 0 10 10"
          fill="none"
          stroke="currentColor"
          strokeWidth="1.3"
        >
          <circle cx="6" cy="4" r="3" />
          <path d="M4 6.500 1 9.500" />
        </svg>
        <Chevron />
      </SelectBox>
      <IconSet icons={filterIcons} gap={5} />
      <FilterToggle type="checkbox" defaultChecked aria-label="Layer filtering" />
    </PanelRow>
    <PanelRow $height={28} $line>
      <SelectBox $width={128}>
        <select aria-label="Blend mode">
          <option>Normal</option>
        </select>
        <Chevron />
      </SelectBox>
      <RowLabel htmlFor="opacity" $width={48} $indent={7}>
        Opacity:
      </RowLabel>
      <Percent id="opacity" />
    </PanelRow>
    <PanelRow $height={30}>
      <RowLabel as="span" $width={31} $indent={3}>
        Lock:
      </RowLabel>
      <IconSet icons={lockIcons} width={22} />
      <RowLabel htmlFor="fill" $width={35} $indent={16}>
        Fill:
      </RowLabel>
      <Percent id="fill" />
    </PanelRow>
    <LayerArea>
      <LayerList>
        {layers.map(({ name, kind, active }) => (
          <LayerRow key={name}>
            <EyeButton aria-label={`Toggle ${name}`}>
              <Icon w={14} h={10}>
                <path d="M.5 5C4-.5 10-.5 13.500 5 10 10.500 4 10.500.5 5z" {...solid} />
                <circle cx="7" cy="5" r="2.800" fill="#525153" stroke="none" />
                <circle cx="7" cy="5" r="1.200" {...solid} />
              </Icon>
            </EyeButton>
            <LayerButton $active={active}>
              <Thumbnail kind={kind} active={active} />
              {name}
            </LayerButton>
          </LayerRow>
        ))}
      </LayerList>
      <ScrollTrack />
    </LayerArea>
    <Footer>
      <IconSet icons={footerIcons} width={27} />
    </Footer>
  </>
);

const App = () => {
  return (
    <>
      <GlobalStyle />
      <Page>
        <MenuBar>
          <PsLogo>Ps</PsLogo>
          <Menus>
            {menus.map((menu) => (
              <MenuItem key={menu}>{menu}</MenuItem>
            ))}
          </Menus>
          <WindowControls>
            <WindowButton aria-label="Minimize">
              <Icon w={10} h={8} {...solid}>
                <path d="M0 4h10v3H0z" />
              </Icon>
            </WindowButton>
            <WindowButton aria-label="Maximize">
              <Icon w={10} h={8} strokeWidth="2">
                <path d="M1 1h8v6H1z" />
              </Icon>
            </WindowButton>
            <WindowButton $wide aria-label="Close">
              <Icon w={10} h={8} strokeWidth="2">
                <path d="m1 0 8 8M9 0 1 8" />
              </Icon>
            </WindowButton>
          </WindowControls>
        </MenuBar>
        <Options />
        <Workspace>
          <Tools />
          <DocumentView />
          <Panels>
            <CollapseBar $end aria-label="Collapse panels">
              <DoubleChevron />
            </CollapseBar>
            <AdjustmentsPanel />
            <PanelGap />
            <LayersPanel />
          </Panels>
        </Workspace>
      </Page>
    </>
  );
};

export default App;
